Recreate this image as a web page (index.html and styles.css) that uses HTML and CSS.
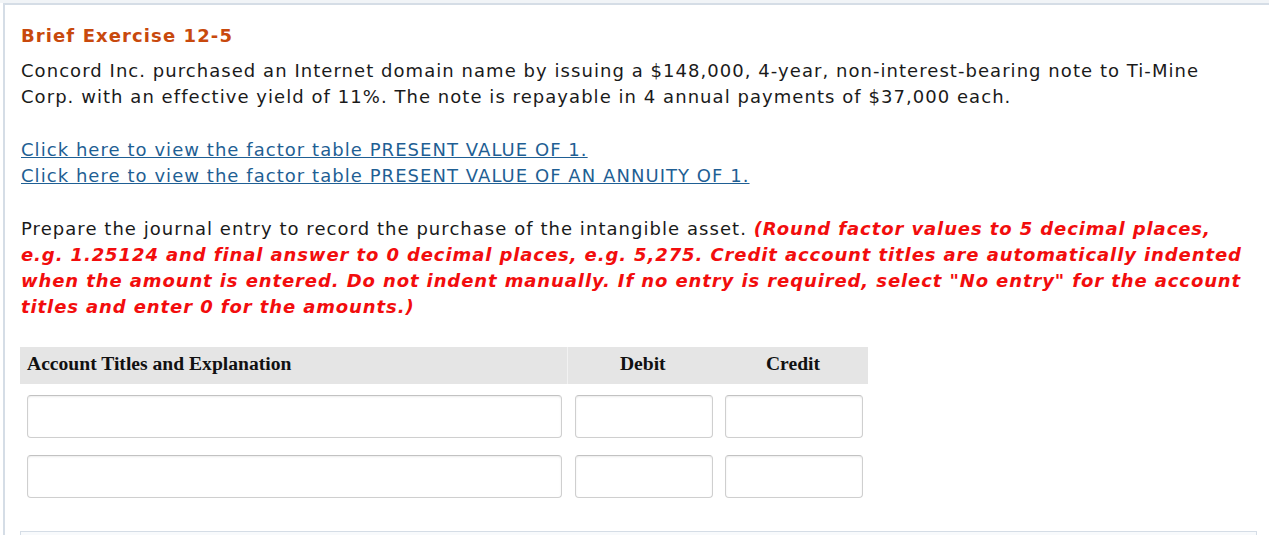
FILE: index.html
```html
<!DOCTYPE html>
<html>
<head>
<meta charset="utf-8">
<title>Brief Exercise 12-5</title>
<link rel="stylesheet" href="styles.css">
</head>
<body>
<div id="question">
    <h2 class="q-title">Brief Exercise 12-5</h2>
    <p class="q-text">Concord Inc. purchased an Internet domain name by issuing a $148,000, 4-year, non-interest-bearing note to Ti-Mine Corp. with an effective yield of 11%. The note is repayable in 4 annual payments of $37,000 each.</p>
    <p class="q-links">
        <a href="#">Click here to view the factor table PRESENT VALUE OF 1.</a><br>
        <a href="#">Click here to view the factor table PRESENT VALUE OF AN ANNUITY OF 1.</a>
    </p>
    <p class="q-text">Prepare the journal entry to record the purchase of the intangible asset. <em class="note">(Round factor values to 5 decimal places, e.g. 1.25124 and final answer to 0 decimal places, e.g. 5,275. Credit account titles are automatically indented when the amount is entered. Do not indent manually. If no entry is required, select "No entry" for the account titles and enter 0 for the amounts.)</em></p>
    <table class="journal">
        <colgroup>
            <col class="w-account">
            <col class="w-debit">
            <col class="w-credit">
        </colgroup>
        <thead>
            <tr>
                <th class="col-account">Account Titles and Explanation</th>
                <th class="col-amount">Debit</th>
                <th class="col-amount">Credit</th>
            </tr>
        </thead>
        <tbody>
            <tr class="first-row">
                <td class="cell-account"><input type="text" class="field field-account"></td>
                <td class="cell-debit"><input type="text" class="field field-amount"></td>
                <td class="cell-credit"><input type="text" class="field field-amount"></td>
            </tr>
            <tr>
                <td class="cell-account"><input type="text" class="field field-account"></td>
                <td class="cell-debit"><input type="text" class="field field-amount"></td>
                <td class="cell-credit"><input type="text" class="field field-amount"></td>
            </tr>
        </tbody>
    </table>
    <div class="next-box"></div>
</div>
</body>
</html>
```
FILE: styles.css
```css
*{padding:0;margin:0;box-sizing:border-box;}
html,body{background:#fff;}
body{
    font-family:"DejaVu Sans",Verdana,sans-serif;
    font-size:18px;
    line-height:26px;
    color:#1a1a1a;
    border-top:3px solid #f1f4f7;
}
#question{
    margin-left:3px;
    border-top:2px solid #d5dde6;
    border-left:2px solid #d5dde6;
    padding:18px 12px 0 16px;
    height:540px;
}
.q-title{
    font-size:18px;
    line-height:26px;
    font-weight:bold;
    letter-spacing:1.1px;
    color:#c8490d;
    margin-bottom:9px;
}
.q-text{
    margin-bottom:27px;
    letter-spacing:1.05px;
}
.q-links{
    margin-bottom:27px;
    letter-spacing:1.05px;
}
.q-links a{
    color:#1f5f94;
    text-decoration:underline;
}
.note{
    color:#f20d0d;
    font-weight:bold;
    font-style:italic;
    letter-spacing:0.9px;
}
.journal{
    border-collapse:collapse;
    table-layout:fixed;
    width:848px;
    margin-left:-1px;
    font-family:"Liberation Serif","Times New Roman",serif;
}
.w-account{width:547px;}
.w-debit{width:151px;}
.w-credit{width:150px;}
.journal th{
    background:#e5e5e5;
    height:37px;
    padding-bottom:3px;
    font-size:19.6px;
    font-weight:bold;
    color:#111;
}
.col-account{
    text-align:left;
    padding-left:7px;
    border-right:1px solid #f2f2f2;
}
.col-amount{
    text-align:center;
}
.journal td{
    padding:0;
    height:60px;
    vertical-align:top;
}
.first-row td{
    padding-top:11px;
    height:71px;
}
.cell-account{padding-left:7px !important;}
.cell-debit{padding-left:8px !important;}
.cell-credit{padding-left:7px !important;}
.field{
    display:block;
    height:43px;
    border:1px solid #cfcfcf;
    border-top-color:#c2c2c2;
    border-radius:4px;
    box-shadow:inset 0 1px 2px rgba(0,0,0,0.08);
    background:#fff;
    font-size:16px;
}
.field-account{width:535px;}
.field-amount{width:138px;}
.next-box{
    margin-top:16px;
    margin-left:-1px;
    width:1237px;
    height:20px;
    border:1px solid #d5dde6;
    background:#f8fafc;
}
```
